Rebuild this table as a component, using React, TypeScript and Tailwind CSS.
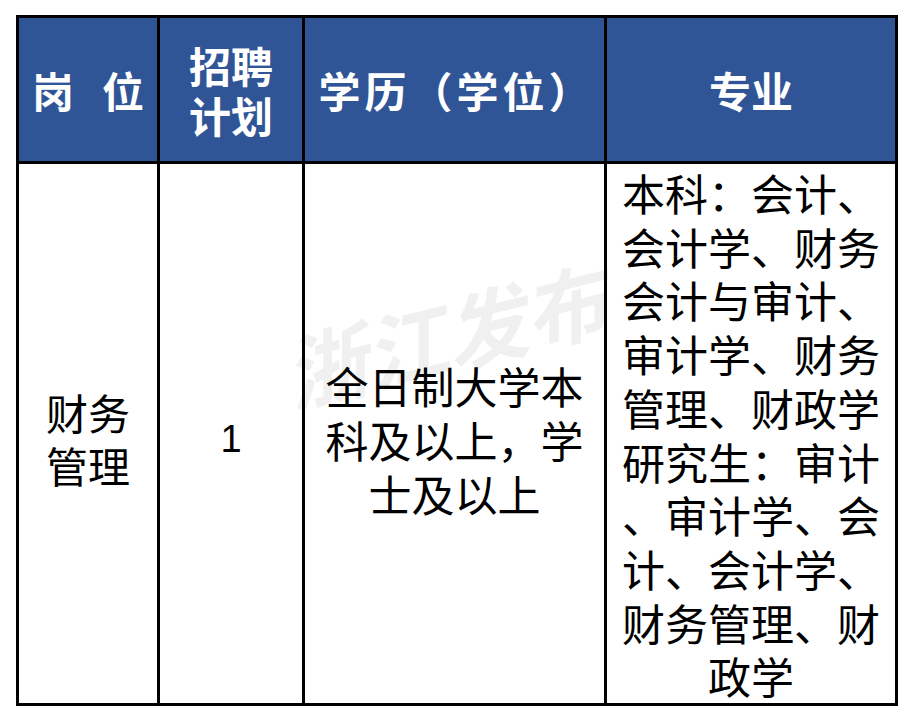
import React from "react"

const cjk = { fontFamily: '"Noto Sans CJK SC", "Noto Sans", sans-serif' }

export default function App() {
  return (
    <div className="w-[914px] h-[722px] bg-white relative overflow-hidden" style={cjk}>
      <div className="absolute left-[16px] top-[15px] w-[882px] bg-black p-[3px] grid grid-cols-[138px_142px_299px_288px] gap-[3px] grid-rows-[143px_539px]">
        {/* header */}
        <div className="bg-[#2f5597] text-white font-bold text-[42px] leading-[50px] flex items-center justify-center">
          <span>岗</span>
          <span className="inline-block w-[28px]" />
          <span>位</span>
        </div>
        <div className="bg-[#2f5597] text-white font-bold text-[42px] leading-[50px] flex items-center justify-center text-center">
          <span>招聘<br />计划</span>
        </div>
        <div className="bg-[#2f5597] text-white font-bold text-[42px] leading-[50px] tracking-[4px] flex items-center justify-center pl-[4px]">
          学历（学位）
        </div>
        <div className="bg-[#2f5597] text-white font-bold text-[42px] leading-[50px] flex items-center justify-center">
          专业
        </div>

        {/* body */}
        <div className="bg-white text-black text-[42px] leading-[53px] flex items-center justify-center text-center pt-[8px]">
          <span>财务<br />管理</span>
        </div>
        <div className="bg-white text-black text-[38px] flex items-center justify-center pt-[12px]" style={{ fontFamily: '"Liberation Sans", Arial, sans-serif' }}>
          1
        </div>
        <div className="bg-white text-black text-[43px] leading-[54px] flex items-center justify-center text-center pt-[10px]">
          <span>全日制大学本<br />科及以上，学<br />士及以上</span>
        </div>
        <div className="bg-white text-black text-[43px] leading-[53.7px] flex items-center justify-center text-center pt-[2px]">
          <span>
            本科：会计、<br />
            会计学、财务<br />
            会计与审计、<br />
            审计学、财务<br />
            管理、财政学<br />
            研究生：审计<br />
            、审计学、会<br />
            计、会计学、<br />
            财务管理、财<br />
            政学
          </span>
        </div>
      </div>

      {/* watermark */}
      <div className="absolute left-[280px] top-[272px] text-[82px] font-bold italic text-black/[0.06] -rotate-[14deg] pointer-events-none tracking-[0px] select-none">
        浙江发布
      </div>
    </div>
  )
}
